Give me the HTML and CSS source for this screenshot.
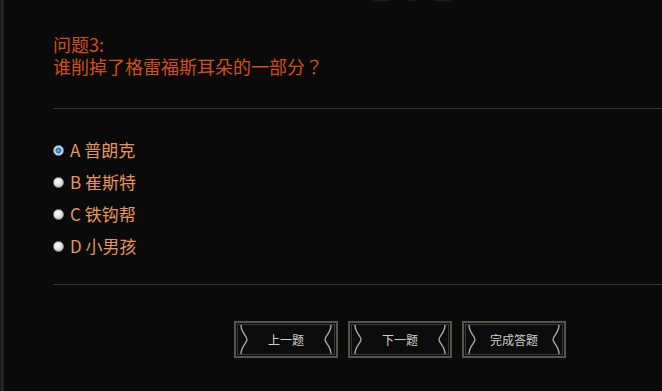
FILE: index.html
```html
<!DOCTYPE html>
<html lang="zh-CN">
<head>
<meta charset="utf-8">
<title>问题3</title>
<link rel="stylesheet" href="styles.css">
</head>
<body>
<div class="frame">
  <div class="edge"></div>
  <div class="main">
    <div class="top-ornament"></div>
    <div class="question">
      <div>问题3:</div>
      <div>谁削掉了格雷福斯耳朵的一部分<span class="qmark" lang="zh-TW">？</span></div>
    </div>
    <div class="rule rule-top"></div>
    <ul class="options">
      <li class="option"><span class="radio checked"></span><span class="label">A 普朗克</span></li>
      <li class="option"><span class="radio"></span><span class="label">B 崔斯特</span></li>
      <li class="option"><span class="radio"></span><span class="label">C 铁钩帮</span></li>
      <li class="option"><span class="radio"></span><span class="label">D 小男孩</span></li>
    </ul>
    <div class="rule rule-bottom"></div>
    <div class="buttons">
      <div class="btn">
        <svg class="orn" viewBox="0 0 10 31" width="10" height="31"><path d="M2 1 C2 9 8 12 8 15.5 C8 19 2 22 2 30" fill="none" stroke="#a8a8a0" stroke-width="1.4"/></svg>
        <span class="btn-text">上一题</span>
        <svg class="orn" viewBox="0 0 10 31" width="10" height="31"><path d="M8 1 C8 9 2 12 2 15.5 C2 19 8 22 8 30" fill="none" stroke="#a8a8a0" stroke-width="1.4"/></svg>
      </div>
      <div class="btn">
        <svg class="orn" viewBox="0 0 10 31" width="10" height="31"><path d="M2 1 C2 9 8 12 8 15.5 C8 19 2 22 2 30" fill="none" stroke="#a8a8a0" stroke-width="1.4"/></svg>
        <span class="btn-text">下一题</span>
        <svg class="orn" viewBox="0 0 10 31" width="10" height="31"><path d="M8 1 C8 9 2 12 2 15.5 C2 19 8 22 8 30" fill="none" stroke="#a8a8a0" stroke-width="1.4"/></svg>
      </div>
      <div class="btn">
        <svg class="orn" viewBox="0 0 10 31" width="10" height="31"><path d="M2 1 C2 9 8 12 8 15.5 C8 19 2 22 2 30" fill="none" stroke="#a8a8a0" stroke-width="1.4"/></svg>
        <span class="btn-text">完成答题</span>
        <svg class="orn" viewBox="0 0 10 31" width="10" height="31"><path d="M8 1 C8 9 2 12 2 15.5 C2 19 8 22 8 30" fill="none" stroke="#a8a8a0" stroke-width="1.4"/></svg>
      </div>
    </div>
  </div>
</div>
</body>
</html>
```
FILE: styles.css
```css
html, body {
  margin: 0;
  padding: 0;
  background: #0a0a0a;
}
body {
  width: 662px;
  height: 391px;
  overflow: hidden;
  font-family: "Noto Sans CJK SC", "Noto Sans", sans-serif;
}
.frame {
  display: flex;
  height: 391px;
}
.edge {
  width: 4px;
  flex: none;
  background: linear-gradient(to right, #141916 0, #1c241f 2px, #2a342e 3px, #111412 4px);
}
.main {
  position: relative;
  flex: 1;
  padding: 33px 0 0 49px;
}
.top-ornament {
  position: absolute;
  top: -2px;
  left: 362px;
  width: 92px;
  height: 5px;
  background:
    radial-gradient(ellipse 12px 2px at 16px 2px, #19201b 50%, transparent 100%),
    radial-gradient(ellipse 8px 2px at 46px 2px, #161b18 50%, transparent 100%),
    radial-gradient(ellipse 12px 2px at 76px 2px, #19201b 50%, transparent 100%);
}
.question {
  color: #d44f18;
  font-size: 18px;
  line-height: 22px;
}
.qmark {
  font-family: "Noto Sans CJK TC", "Noto Sans CJK SC", sans-serif;
}
.rule {
  height: 1px;
  background: #333331;
}
.rule-top {
  margin-top: 31px;
}
.options {
  list-style: none;
  margin: 25px 0 0 0;
  padding: 0;
}
.option {
  display: flex;
  align-items: center;
  height: 32px;
}
.radio {
  width: 11px;
  height: 11px;
  box-sizing: border-box;
  border-radius: 50%;
  border: 1px solid #8a8a8a;
  background: radial-gradient(circle at 40% 35%, #ffffff 0, #e6e6e6 45%, #b4b4b4 100%);
  margin-right: 6px;
  flex: none;
}
.radio.checked {
  border-color: #7c8a96;
  background: radial-gradient(circle at 50% 50%, #5fb4ec 0, #1f6fb5 2.5px, #d8dde2 3.5px, #f2f2f2 100%);
}
.label {
  color: #e6955a;
  font-size: 17px;
  line-height: 20px;
}
.rule-bottom {
  margin-top: 22px;
}
.buttons {
  display: flex;
  gap: 10px;
  margin-top: 36px;
  padding-left: 181px;
}
.btn {
  width: 104px;
  height: 37px;
  box-sizing: border-box;
  border: 2px solid #55554e;
  background: #0c0c0c;
  box-shadow: inset 0 0 0 1px #0b0b0b, inset 0 0 0 2px #3c3c37;
  display: flex;
  align-items: center;
  justify-content: space-between;
  padding: 0 3px;
}
.orn {
  display: block;
  flex: none;
}
.btn-text {
  color: #cfcfcf;
  font-size: 12px;
  line-height: 14px;
}
```
